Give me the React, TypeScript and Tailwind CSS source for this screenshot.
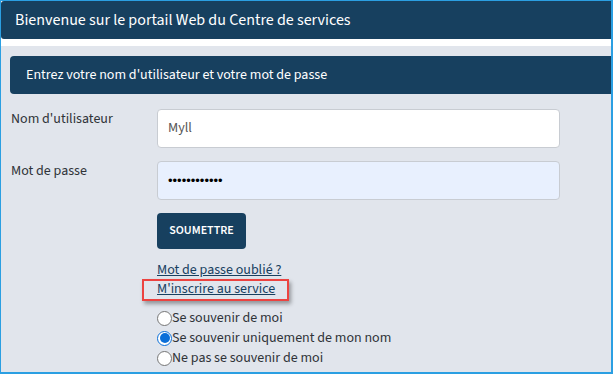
import React from "react";

const NAVY = "bg-[#17405f]";

function Radio({ checked, label }: { checked?: boolean; label: string }) {
  return (
    <div className="flex items-center h-[20px]">
      {checked ? (
        <span className="w-[15px] h-[15px] rounded-full border border-[#0b6fd8] bg-white flex items-center justify-center shrink-0">
          <span className="w-[10px] h-[10px] rounded-full bg-[#0b6fd8]" />
        </span>
      ) : (
        <span className="w-[15px] h-[15px] rounded-full border border-[#767676] bg-white shrink-0" />
      )}
      <span className="text-[14px] text-[#2f3338] leading-[20px]">{label}</span>
    </div>
  );
}

export default function App() {
  return (
    <div
      className="w-[613px] h-[374px] overflow-hidden flex flex-col bg-white border-t border-l border-r-2 border-b-2 border-[#2b9fe2]"
      style={{ fontFamily: "'Source Sans 3', 'Source Sans Pro', 'Open Sans', sans-serif" }}
    >
      <div className={`${NAVY} h-[38px] rounded-l-[3px] flex items-center pl-[14px] shrink-0`}>
        <span className="text-white text-[16px] leading-none">
          Bienvenue sur le portail Web du Centre de services
        </span>
      </div>
      <div className="h-[7px] shrink-0" />
      <div className="flex-1 bg-[#e1e5ec] pt-[10px] flex flex-col">
        <div className={`${NAVY} ml-[9px] h-[38px] rounded-l-[4px] flex items-center pl-[16px]`}>
          <span className="text-white text-[14px] leading-none">
            Entrez votre nom d'utilisateur et votre mot de passe
          </span>
        </div>
        <div className="flex mt-[15px]">
          <div className="w-[156px] pl-[10px] text-[14px] leading-[20px] text-[#2f3338]">Nom d'utilisateur</div>
          <div className="w-[403px] h-[39px] bg-white border border-[#c8ccd2] rounded-[4px] flex items-center pl-[10px] text-[14px] text-[#555]">
            Myll
          </div>
        </div>
        <div className="flex mt-[13px]">
          <div className="w-[156px] pl-[10px] text-[14px] leading-[20px] text-[#2f3338]">Mot de passe</div>
          <div
            className="w-[403px] h-[39px] bg-[#e8f0fe] border border-[#c8ccd2] rounded-[4px] flex items-center pl-[10px] text-[13px] text-black"
            style={{ fontFamily: "'Liberation Sans', Arial, sans-serif" }}
          >
            ••••••••••••
          </div>
        </div>
        <div className="flex flex-col items-start pl-[156px]">
          <div className={`${NAVY} mt-[13px] w-[89px] h-[36px] rounded-[4px] flex items-center justify-center text-white text-[12px] font-semibold`}>
            SOUMETTRE
          </div>
          <a className="mt-[12px] text-[14px] leading-[19px] text-[#17405f] underline">Mot de passe oublié ?</a>
          <div className="relative">
            <a className="block text-[14px] leading-[19px] text-[#17405f] underline">M'inscrire au service</a>
            <div className="absolute left-[-15px] top-[-1px] w-[147px] h-[22px] border-2 border-[#ec4340] shadow-[2px_3px_4px_rgba(0,0,0,0.35)]" />
          </div>
          <div className="mt-[9px] flex flex-col">
            <Radio label="Se souvenir de moi" />
            <Radio checked label="Se souvenir uniquement de mon nom" />
            <Radio label="Ne pas se souvenir de moi" />
          </div>
        </div>
      </div>
    </div>
  );
}
